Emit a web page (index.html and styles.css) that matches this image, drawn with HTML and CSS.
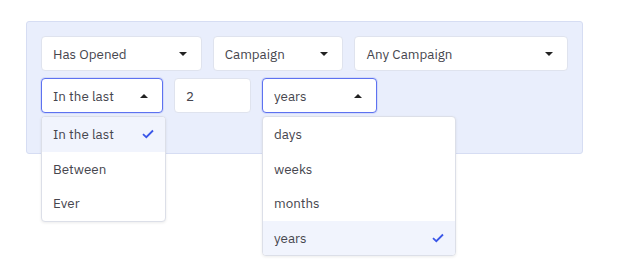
FILE: index.html
```html
<!DOCTYPE html>
<html>
<head>
  <title>Segment Filter</title>
  <link rel="stylesheet" href="styles.css">
</head>
<body>
  <div class="filter-panel">
    <div class="filter-row">
      <div class="select select-action">
        <span>Has Opened</span>
        <span class="caret"></span>
      </div>
      <div class="select select-type">
        <span>Campaign</span>
        <span class="caret"></span>
      </div>
      <div class="select select-campaign">
        <span>Any Campaign</span>
        <span class="caret"></span>
      </div>
    </div>
    <div class="filter-row">
      <div class="select-wrap">
        <div class="select select-range open">
          <span>In the last</span>
          <span class="caret up"></span>
        </div>
        <ul class="menu menu-range">
          <li class="selected">In the last
            <svg class="check" width="12" height="10" viewBox="0 0 12 10"><path d="M1 5.2 L4.3 8.2 L11 1.5" fill="none" stroke="#3b57e8" stroke-width="1.8"/></svg>
          </li>
          <li>Between</li>
          <li>Ever</li>
        </ul>
      </div>
      <div class="input-number">2</div>
      <div class="select-wrap">
        <div class="select select-unit open">
          <span>years</span>
          <span class="caret up"></span>
        </div>
        <ul class="menu menu-unit">
          <li>days</li>
          <li>weeks</li>
          <li>months</li>
          <li class="selected">years
            <svg class="check" width="12" height="10" viewBox="0 0 12 10"><path d="M1 5.2 L4.3 8.2 L11 1.5" fill="none" stroke="#3b57e8" stroke-width="1.8"/></svg>
          </li>
        </ul>
      </div>
    </div>
  </div>
</body>
</html>
```

FILE: styles.css
```css
html {
  height: 100%;
}

body {
  margin: 0;
  min-height: 100%;
  box-sizing: border-box;
  padding: 21px 0 0 26px;
  font-family: "IBM Plex Sans", "Noto Sans", Arial, sans-serif;
  font-size: 13.4px;
  color: #46464e;
  background-color: #fff;
}

.filter-panel {
  width: 527px;
  padding: 14px 14px 40px 14px;
  background-color: #e9eefc;
  border: 1px solid #d6ddf3;
  border-radius: 3px;
}

.filter-row {
  display: flex;
  gap: 11px;
}

.filter-row + .filter-row {
  margin-top: 7px;
}

.select,
.input-number {
  box-sizing: border-box;
  height: 35px;
  display: flex;
  align-items: center;
  justify-content: space-between;
  padding: 0 14px 0 11px;
  background-color: #fff;
  border: 1px solid #dfe3ee;
  border-radius: 4px;
}

.select-action { width: 161px; }
.select-type { width: 131px; }
.select-campaign { width: 214px; }
.select-range { width: 122px; }
.select-unit { width: 115px; }
.input-number { width: 77px; }

.select.open {
  border-color: #5d72f0;
  box-shadow: 0 0 0 1px rgba(93, 114, 240, 0.15);
}

.caret {
  width: 0;
  height: 0;
  border-left: 4px solid transparent;
  border-right: 4px solid transparent;
  border-top: 4px solid #222;
}

.caret.up {
  border-top: none;
  border-bottom: 4px solid #222;
}

.select-wrap {
  position: relative;
}

.menu {
  position: absolute;
  top: 38px;
  left: 0;
  margin: 0;
  padding: 0;
  list-style: none;
  background-color: #fff;
  border: 1px solid #dcdfe8;
  border-radius: 4px;
  box-shadow: 0 1px 3px rgba(0, 0, 0, 0.08);
  overflow: hidden;
  z-index: 10;
}

.menu-range { width: 123px; }
.menu-unit { width: 192px; }

.menu li {
  height: 34.5px;
  display: flex;
  align-items: center;
  justify-content: space-between;
  padding: 0 11px 0 11px;
}

.menu li.selected {
  background-color: #f1f4fd;
}

.check {
  display: block;
}
```
